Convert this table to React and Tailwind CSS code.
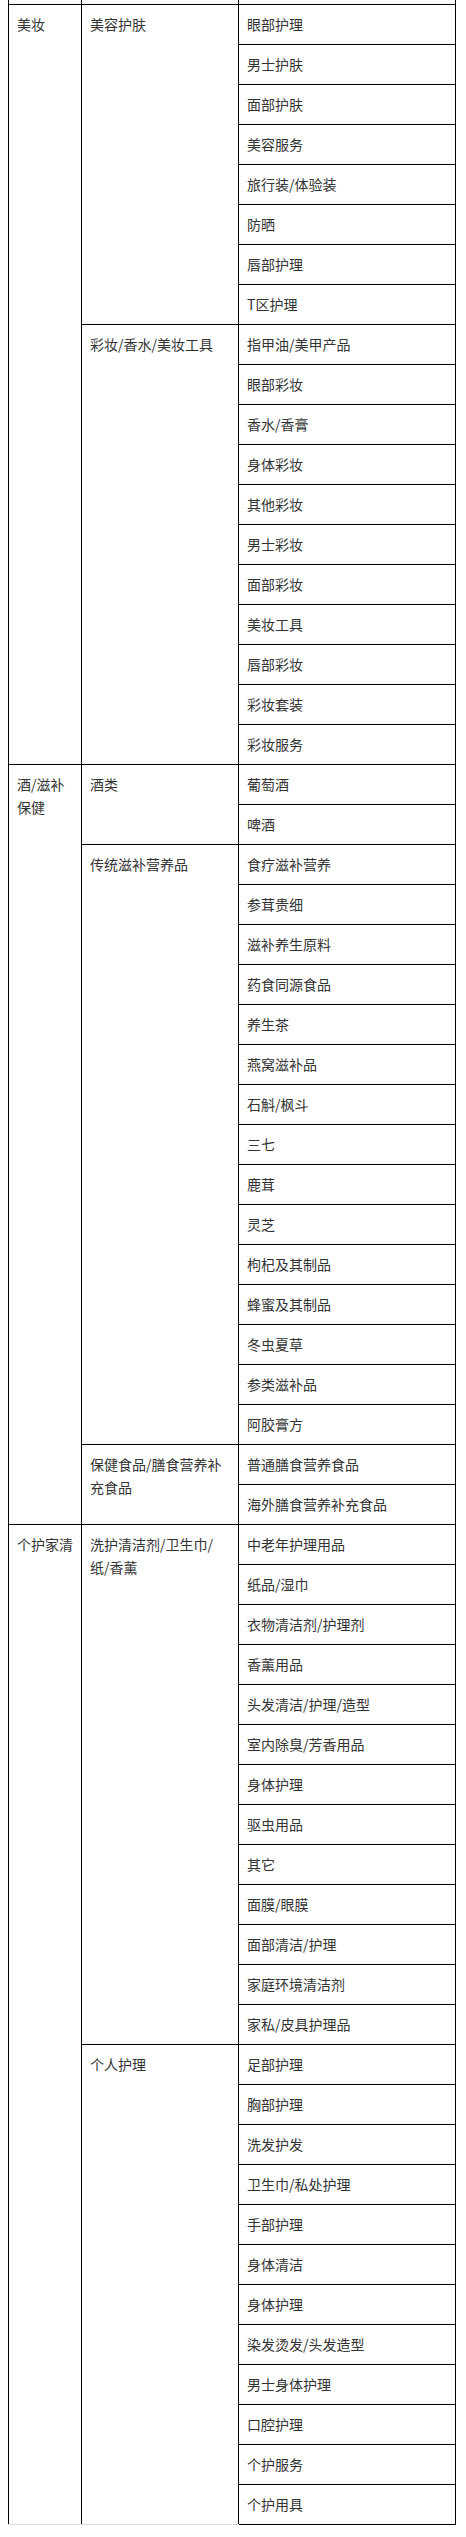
import React from "react";

const groups = [
  {
    name: "美妆",
    subs: [
      {
        name: "美容护肤",
        items: ["眼部护理", "男士护肤", "面部护肤", "美容服务", "旅行装/体验装", "防晒", "唇部护理", "T区护理"],
      },
      {
        name: "彩妆/香水/美妆工具",
        items: [
          "指甲油/美甲产品",
          "眼部彩妆",
          "香水/香膏",
          "身体彩妆",
          "其他彩妆",
          "男士彩妆",
          "面部彩妆",
          "美妆工具",
          "唇部彩妆",
          "彩妆套装",
          "彩妆服务",
        ],
      },
    ],
  },
  {
    name: "酒/滋补保健",
    subs: [
      { name: "酒类", items: ["葡萄酒", "啤酒"] },
      {
        name: "传统滋补营养品",
        items: [
          "食疗滋补营养",
          "参茸贵细",
          "滋补养生原料",
          "药食同源食品",
          "养生茶",
          "燕窝滋补品",
          "石斛/枫斗",
          "三七",
          "鹿茸",
          "灵芝",
          "枸杞及其制品",
          "蜂蜜及其制品",
          "冬虫夏草",
          "参类滋补品",
          "阿胶膏方",
        ],
      },
      { name: "保健食品/膳食营养补充食品", items: ["普通膳食营养食品", "海外膳食营养补充食品"] },
    ],
  },
  {
    name: "个护家清",
    subs: [
      {
        name: "洗护清洁剂/卫生巾/纸/香薰",
        items: [
          "中老年护理用品",
          "纸品/湿巾",
          "衣物清洁剂/护理剂",
          "香薰用品",
          "头发清洁/护理/造型",
          "室内除臭/芳香用品",
          "身体护理",
          "驱虫用品",
          "其它",
          "面膜/眼膜",
          "面部清洁/护理",
          "家庭环境清洁剂",
          "家私/皮具护理品",
        ],
      },
      {
        name: "个人护理",
        items: [
          "足部护理",
          "胸部护理",
          "洗发护发",
          "卫生巾/私处护理",
          "手部护理",
          "身体清洁",
          "身体护理",
          "染发烫发/头发造型",
          "男士身体护理",
          "口腔护理",
          "个护服务",
          "个护用具",
        ],
      },
    ],
  },
];

const cell = "border border-black align-top py-2 leading-[23px] break-all";

export default function App() {
  const rows = [];
  groups.forEach((g, gi) => {
    const total = g.subs.reduce((n, s) => n + s.items.length, 0);
    g.subs.forEach((s, si) => {
      s.items.forEach((item, ii) => {
        const last = gi === groups.length - 1;
        rows.push(
          <tr key={`${gi}-${si}-${ii}`}>
            {si === 0 && ii === 0 && (
              <td rowSpan={total} className={`${cell} pl-[8px] pr-[3px] ${last ? "border-b-[#dddddd]" : ""}`}>
                {g.name}
              </td>
            )}
            {ii === 0 && (
              <td
                rowSpan={s.items.length}
                className={`${cell} pl-[8px] pr-[13px] ${last && si === g.subs.length - 1 ? "border-b-[#dddddd]" : ""}`}
              >
                {s.name}
              </td>
            )}
            <td className={`${cell} px-[8px]`}>{item}</td>
          </tr>
        );
      });
    });
  });

  return (
    <div
      className="min-h-[2537px] bg-white pl-[8px] text-[14px] text-[#333333]"
      style={{ fontFamily: '"Noto Sans CJK SC", "Noto Sans", sans-serif' }}
    >
      <table className="table-fixed border-collapse w-[447px]">
        <colgroup>
          <col className="w-[73px]" />
          <col className="w-[157px]" />
          <col className="w-[217px]" />
        </colgroup>
        <tbody>
          <tr className="h-[4px]">
            <td className="border border-t-0 border-black p-0 h-[4px]"></td>
            <td className="border border-t-0 border-black p-0 h-[4px]"></td>
            <td className="border border-t-0 border-black p-0 h-[4px]"></td>
          </tr>
          {rows}
        </tbody>
      </table>
    </div>
  );
}
